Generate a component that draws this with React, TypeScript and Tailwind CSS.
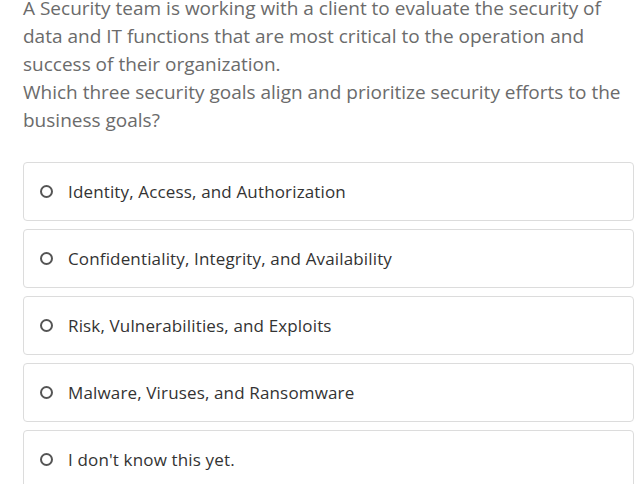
const options = [
  'Identity, Access, and Authorization',
  'Confidentiality, Integrity, and Availability',
  'Risk, Vulnerabilities, and Exploits',
  'Malware, Viruses, and Ransomware',
  "I don't know this yet.",
]

const lines = [
  'A Security team is working with a client to evaluate the security of',
  'data and IT functions that are most critical to the operation and',
  'success of their organization.',
  'Which three security goals align and prioritize security efforts to the',
  'business goals?',
]

export default function App() {
  return (
    <div className="h-[484px] overflow-hidden bg-white font-['Open_Sans',sans-serif]">
      <div className="-mt-[6px] pl-[23px] pr-[5px]">
        <p className="text-[19px] leading-[28px] text-[#6b6b6b]">
          {lines.map((l) => (
            <span key={l} className="block whitespace-nowrap">
              {l}
            </span>
          ))}
        </p>

        <div className="mt-[28px] flex flex-col gap-[8px]">
          {options.map((opt) => (
            <label
              key={opt}
              className="flex h-[59px] items-center rounded-[4px] border border-[#dcdcdc] pl-[16px]"
            >
              <span className="h-[13px] w-[13px] shrink-0 rounded-full border-2 border-[#555]" />
              <span className="ml-[15px] pt-px text-[17px] tracking-[0.15px] text-[#333]">{opt}</span>
            </label>
          ))}
        </div>
      </div>
    </div>
  )
}
